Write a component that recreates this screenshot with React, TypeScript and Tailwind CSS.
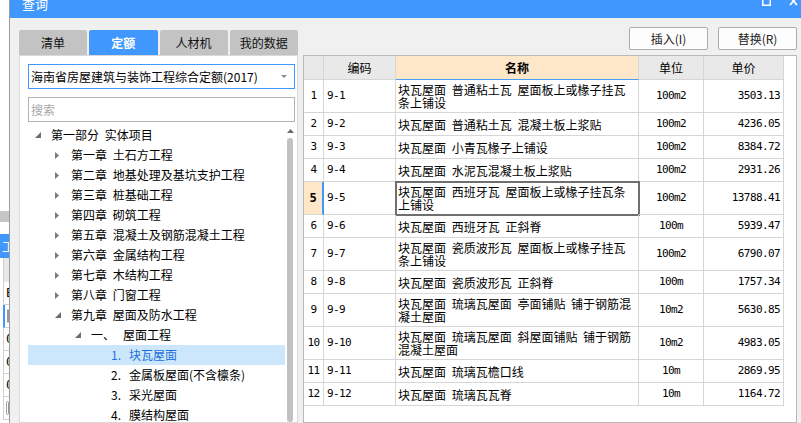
import React from "react";

type TreeNode = {
  level: number;
  toggle?: "open" | "closed";
  num?: string;
  label: string;
  extra?: string;
  selected?: boolean;
};

type Row = {
  n: number;
  code: string;
  name: string[];
  unit: string;
  price: string;
};

const tree: TreeNode[] = [
  { level: 0, toggle: "open", label: "第一部分 实体项目" },
  { level: 1, toggle: "closed", label: "第一章 土石方工程" },
  { level: 1, toggle: "closed", label: "第二章 地基处理及基坑支护工程" },
  { level: 1, toggle: "closed", label: "第三章 桩基础工程" },
  { level: 1, toggle: "closed", label: "第四章 砌筑工程" },
  { level: 1, toggle: "closed", label: "第五章 混凝土及钢筋混凝土工程" },
  { level: 1, toggle: "closed", label: "第六章 金属结构工程" },
  { level: 1, toggle: "closed", label: "第七章 木结构工程" },
  { level: 1, toggle: "closed", label: "第八章 门窗工程" },
  { level: 1, toggle: "open", label: "第九章 屋面及防水工程" },
  { level: 2, toggle: "open", label: "一、", extra: "屋面工程" },
  { level: 3, num: "1.", label: "块瓦屋面", selected: true },
  { level: 3, num: "2.", label: "金属板屋面(不含檩条)" },
  { level: 3, num: "3.", label: "采光屋面" },
  { level: 3, num: "4.", label: "膜结构屋面" },
];

const rows: Row[] = [
  { n: 1, code: "9-1", name: ["块瓦屋面 普通粘土瓦 屋面板上或椽子挂瓦", "条上铺设"], unit: "100m2", price: "3503.13" },
  { n: 2, code: "9-2", name: ["块瓦屋面 普通粘土瓦 混凝土板上浆贴"], unit: "100m2", price: "4236.05" },
  { n: 3, code: "9-3", name: ["块瓦屋面 小青瓦椽子上铺设"], unit: "100m2", price: "8384.72" },
  { n: 4, code: "9-4", name: ["块瓦屋面 水泥瓦混凝土板上浆贴"], unit: "100m2", price: "2931.26" },
  { n: 5, code: "9-5", name: ["块瓦屋面 西班牙瓦 屋面板上或椽子挂瓦条", "上铺设"], unit: "100m2", price: "13788.41" },
  { n: 6, code: "9-6", name: ["块瓦屋面 西班牙瓦 正斜脊"], unit: "100m", price: "5939.47" },
  { n: 7, code: "9-7", name: ["块瓦屋面 瓷质波形瓦 屋面板上或椽子挂瓦", "条上铺设"], unit: "100m2", price: "6790.07" },
  { n: 8, code: "9-8", name: ["块瓦屋面 瓷质波形瓦 正斜脊"], unit: "100m", price: "1757.34" },
  { n: 9, code: "9-9", name: ["块瓦屋面 琉璃瓦屋面 亭面铺贴 铺于钢筋混", "凝土屋面"], unit: "10m2", price: "5630.85" },
  { n: 10, code: "9-10", name: ["块瓦屋面 琉璃瓦屋面 斜屋面铺贴 铺于钢筋", "混凝土屋面"], unit: "10m2", price: "4983.05" },
  { n: 11, code: "9-11", name: ["块瓦屋面 琉璃瓦檐口线"], unit: "10m", price: "2869.95" },
  { n: 12, code: "9-12", name: ["块瓦屋面 琉璃瓦瓦脊"], unit: "10m", price: "1164.72" },
];

const SELECTED_ROW = 5;
const mono = "font-['DejaVu_Sans_Mono',monospace] text-[11px] tracking-[-0.6px]";

function Caret({ toggle }: { toggle?: "open" | "closed" }) {
  if (toggle === "open")
    return (
      <svg width="6" height="6" viewBox="0 0 6 6">
        <path d="M6 0V6H0Z" fill="#6b6b6b" />
      </svg>
    );
  if (toggle === "closed")
    return (
      <svg width="4" height="7" viewBox="0 0 4 7">
        <path d="M0 0L4 3.5L0 7Z" fill="#7a7a7a" />
      </svg>
    );
  return null;
}

// the app window behind the dialog, only a sliver shows
function BehindStrip() {
  return (
    <div className="flex w-[9px] shrink-0 flex-col overflow-hidden bg-white">
      <div className="h-[211px]" />
      <div className="h-[11px] bg-[#c6c6c6]" />
      <div className="h-[12px]" />
      <div className="h-[24px] bg-[#4098ff] pl-[2px] text-[13px] leading-[24px] whitespace-nowrap text-white">工</div>
      <div className="h-[24px] border-l border-[#cfcfcf] bg-[#e8e8e8] ml-[3px]" />
      {["E", "box", "0", "0", "0", "box"].map((t, i) => (
        <div
          key={i}
          className={`ml-[3px] flex h-[23px] items-center border-b border-l border-[#d2d2d2] pl-[2px] whitespace-nowrap ${
            i === 1 ? "border-l-[#4098ff] border-l-2" : ""
          }`}
        >
          {t === "box" ? (
            <span className="inline-block h-[14px] w-[8px] rounded-[2px] border border-[#9a9a9a]" />
          ) : (
            <span className={`${mono} text-[12px]`}>{t}</span>
          )}
        </div>
      ))}
    </div>
  );
}

function TitleBar() {
  return (
    <div className="flex h-[28px] shrink-0 items-center justify-between bg-[#4098ff] pl-[12px] pr-[3px]">
      <span className="text-[13px] text-white">查询</span>
      <div className="flex gap-[18px] self-start pt-[6px]">
        <svg width="9" height="10" viewBox="0 0 9 10">
          <rect x="0.75" y="0.75" width="7.5" height="8.5" fill="none" stroke="#fff" strokeWidth="1.5" />
        </svg>
        <svg width="9" height="10" viewBox="0 0 9 10">
          <path d="M1 1L8 9M8 1L1 9" stroke="#fff" strokeWidth="1.8" />
        </svg>
      </div>
    </div>
  );
}

function LeftColumn() {
  const tabs = ["清单", "定额", "人材机", "我的数据"];
  return (
    <div className="flex w-[279px] shrink-0 flex-col pt-[12px]">
      <div className="flex h-[25px] gap-[2px]">
        {tabs.map((t) => (
          <div
            key={t}
            className={`flex w-[78px] items-center justify-center rounded-t-[2px] text-[12px] ${
              t === "定额" ? "bg-[#4098ff] font-bold text-white" : "bg-[#c3c3c3] text-[#111]"
            }`}
          >
            {t}
          </div>
        ))}
      </div>
      <div className="flex min-h-0 flex-1 flex-col border border-[#d9d9d9] bg-white pl-[8px] pr-[2px] pt-[8px]">
        <div className="flex h-[25px] items-center justify-between border border-[#4098ff] pl-[2px] pr-[7px]">
          <span className="text-[12px]">海南省房屋建筑与装饰工程综合定额(2017)</span>
          <svg width="6" height="3" viewBox="0 0 6 3">
            <path d="M0 0H6L3 3Z" fill="#8a8a8a" />
          </svg>
        </div>
        <div className="mt-[8px] flex h-[25px] items-center border border-[#b4b4b4] pl-[2px] text-[12px] text-[#a8a8a8]">
          搜索
        </div>
        <div className="mt-[3px] flex min-h-0 flex-1">
          <div className="flex-1">
            {tree.map((node, i) => (
              <div
                key={i}
                className={`flex h-[20px] items-center whitespace-nowrap [word-spacing:3px] ${
                  node.selected ? "bg-[#cce6fc] text-[#1d70dd]" : "text-black"
                }`}
                style={{ paddingLeft: 7 + node.level * 20 }}
              >
                <span className="flex w-[16px] shrink-0 items-center">
                  <Caret toggle={node.toggle} />
                </span>
                {node.num && <span className="w-[18px] text-[12px]">{node.num}</span>}
                <span className="text-[12px]">{node.label}</span>
                {node.extra && <span className="ml-[8px] text-[12px]">{node.extra}</span>}
              </div>
            ))}
          </div>
          <div className="flex w-[10px] shrink-0 flex-col items-center pt-[4px]">
            <svg width="7" height="4" viewBox="0 0 7 4">
              <path d="M0 4L3.5 0L7 4Z" fill="#6a6a6a" />
            </svg>
            <div className="mt-[5px] w-[6px] flex-1 rounded-[3px] bg-[#c2c2c2]" />
          </div>
        </div>
      </div>
    </div>
  );
}

function Table() {
  const grid = "grid grid-cols-[20px_72px_243px_65px_80px]";
  const cell = "flex items-center border-b border-r border-[#d6d6d6]";
  return (
    <div className="min-h-0 flex-1 border border-[#b9b9b9] bg-white">
      <div className={grid}>
        <div className={`${cell} h-[24px] bg-[#e9e9e9]`} />
        <div className={`${cell} h-[24px] justify-center bg-[#e9e9e9] text-[12px]`}>编码</div>
        <div className={`${cell} h-[24px] justify-center border-b-[#4a9cf5] bg-[#fee6c9] text-[12px] font-bold`}>名称</div>
        <div className={`${cell} h-[24px] justify-center bg-[#e9e9e9] text-[12px]`}>单位</div>
        <div className={`${cell} h-[24px] justify-center bg-[#e9e9e9] text-[12px]`}>单价</div>
        {rows.map((r) => {
          const h = r.name.length > 1 ? "h-[33px]" : "h-[23px]";
          const sel = r.n === SELECTED_ROW;
          return (
            <React.Fragment key={r.n}>
              <div
                className={`${cell} ${h} justify-center ${
                  sel ? "border-r-2 border-r-[#4098ff] bg-[#fee6c9] font-bold text-[13px]" : ""
                }`}
              >
                <span className={sel ? "font-['DejaVu_Sans_Mono',monospace] text-[12px] font-bold" : mono}>{r.n}</span>
              </div>
              <div className={`${cell} ${h} pl-[3px]`}>
                <span className={mono}>{r.code}</span>
              </div>
              <div
                className={`${cell} ${h} pl-[2px] ${sel ? "outline-2 outline-[#6f6f6f] -outline-offset-1" : ""}`}
              >
                <div className="text-[12px] leading-[13px] whitespace-nowrap [word-spacing:3px]">
                  {r.name.map((line, i) => (
                    <div key={i}>{line}</div>
                  ))}
                </div>
              </div>
              <div className={`${cell} ${h} justify-center`}>
                <span className={mono}>{r.unit}</span>
              </div>
              <div className={`${cell} ${h} justify-end pr-[3px]`}>
                <span className={mono}>{r.price}</span>
              </div>
            </React.Fragment>
          );
        })}
      </div>
    </div>
  );
}

function RightColumn() {
  return (
    <div className="flex w-[494px] shrink-0 flex-col pt-[9px]">
      <div className="flex h-[23px] justify-end gap-[10px]">
        <button className="w-[79px] rounded-[2px] border border-[#adadad] bg-[#fdfdfd] text-[12px] text-[#222]">
          插入(I)
        </button>
        <button className="w-[79px] rounded-[2px] border border-[#adadad] bg-[#fdfdfd] text-[12px] text-[#222]">
          替换(R)
        </button>
      </div>
      <div className="mt-[5px] flex min-h-0 flex-1 flex-col">
        <Table />
      </div>
    </div>
  );
}

export default function App() {
  return (
    <div className="flex h-[423px] w-[801px] overflow-hidden bg-white font-['Noto_Sans_CJK_SC','Noto_Sans',sans-serif] text-[12px] text-black">
      <BehindStrip />
      <div className="-mt-[10px] flex h-[433px] min-w-0 flex-1 flex-col border-l border-[#9c9c9c] bg-[#f0f0f0]">
        <TitleBar />
        <div className="flex min-h-0 flex-1 gap-[5px] pl-[9px]">
          <LeftColumn />
          <RightColumn />
        </div>
      </div>
    </div>
  );
}
